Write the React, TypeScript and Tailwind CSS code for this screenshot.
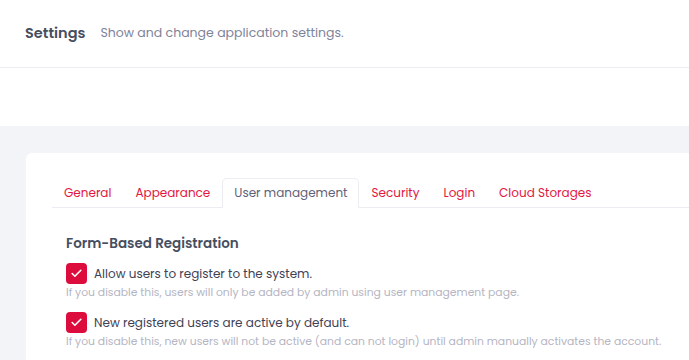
import { Check } from "lucide-react"

const tabs = ["General", "Appearance", "User management", "Security", "Login", "Cloud Storages"]

function CheckRow({ label, help }: { label: string; help: string }) {
	return (
		<div className="flex flex-col">
			<label className="flex items-center gap-[7px] h-[21px]">
				<span className="w-[21px] h-[21px] rounded-[4px] bg-[#dc0d3c] flex items-center justify-center">
					<Check className="w-[13px] h-[13px] text-white" strokeWidth={3} />
				</span>
				<span className="text-[12px] text-[#3f4254]">{label}</span>
			</label>
			<p className="mt-[1px] text-[10.8px] leading-[16px] text-[#b5b5c3]">{help}</p>
		</div>
	)
}

export default function App() {
	return (
		<div className="min-h-screen bg-[#f3f4f8] font-['Poppins','Inter',sans-serif] overflow-hidden">
			<div className="bg-white">
				<div className="h-[68px] flex items-center px-[25px] gap-[15px] border-b border-[#ebedf3]">
					<h1 className="text-[14.5px] font-semibold text-[#464e5f]">Settings</h1>
					<span className="text-[12.5px] text-[#7e8299]">Show and change application settings.</span>
				</div>
				<div className="h-[58px]" />
			</div>

			<div className="pt-[27px] pl-[26px]">
				<div className="bg-white rounded-tl-[6px] pt-[25px] pl-[26px] min-h-[240px]">
					<div className="flex border-b border-[#ebedf3] text-[12px]">
						{tabs.map(tab => {
							const active = tab === "User management"
							return (
								<div
									key={tab}
									className={
										active
											? "px-[11px] h-[30px] flex items-center -mb-px border border-[#ebedf3] border-b-white rounded-t-[5px] bg-white text-[#5e6278]"
											: "px-[11px] h-[30px] flex items-center -mb-px border border-transparent text-[#e3163f]"
									}
								>
									{tab}
								</div>
							)
						})}
					</div>

					<div className="pl-[14px] pt-[26px] flex flex-col">
						<h2 className="text-[13.5px] font-semibold text-[#464e5f]">Form-Based Registration</h2>
						<div className="mt-[9px] flex flex-col gap-[11px]">
							<CheckRow
								label="Allow users to register to the system."
								help="If you disable this, users will only be added by admin using user management page."
							/>
							<CheckRow
								label="New registered users are active by default."
								help="If you disable this, new users will not be active (and can not login) until admin manually activates the account."
							/>
						</div>
					</div>
				</div>
			</div>
		</div>
	)
}
